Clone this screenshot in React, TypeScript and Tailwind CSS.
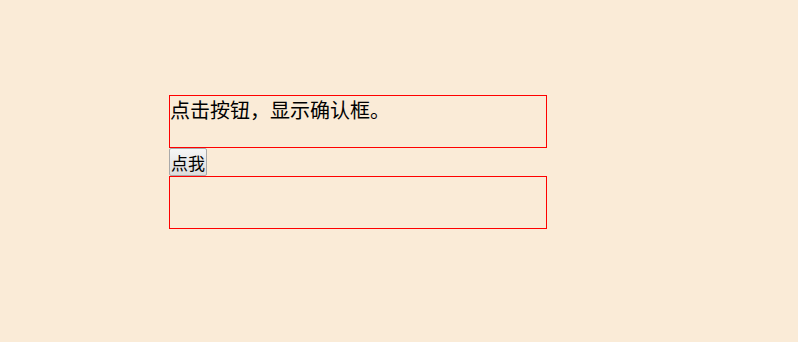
export default function App() {
  return (
    <div
      className="min-h-[342px] bg-[#faebd7] pt-[95px] pl-[169px] text-black"
      style={{ fontFamily: '"Noto Sans CJK SC", "Microsoft YaHei", sans-serif' }}
    >
      <div className="flex flex-col items-start">
        <div className="w-[378px] h-[53px] border border-[#ff0000] text-[20px] leading-[27px]">
          点击按钮，显示确认框。
        </div>
        <button className="w-[38px] h-[28px] flex items-center justify-center border border-[#a9a9a9] rounded-[2px] bg-gradient-to-b from-[#f6f6f6] to-[#dddddd] text-[17px] leading-none text-black">
          点我
        </button>
        <div className="w-[378px] h-[53px] border border-[#ff0000]"></div>
      </div>
    </div>
  );
}
